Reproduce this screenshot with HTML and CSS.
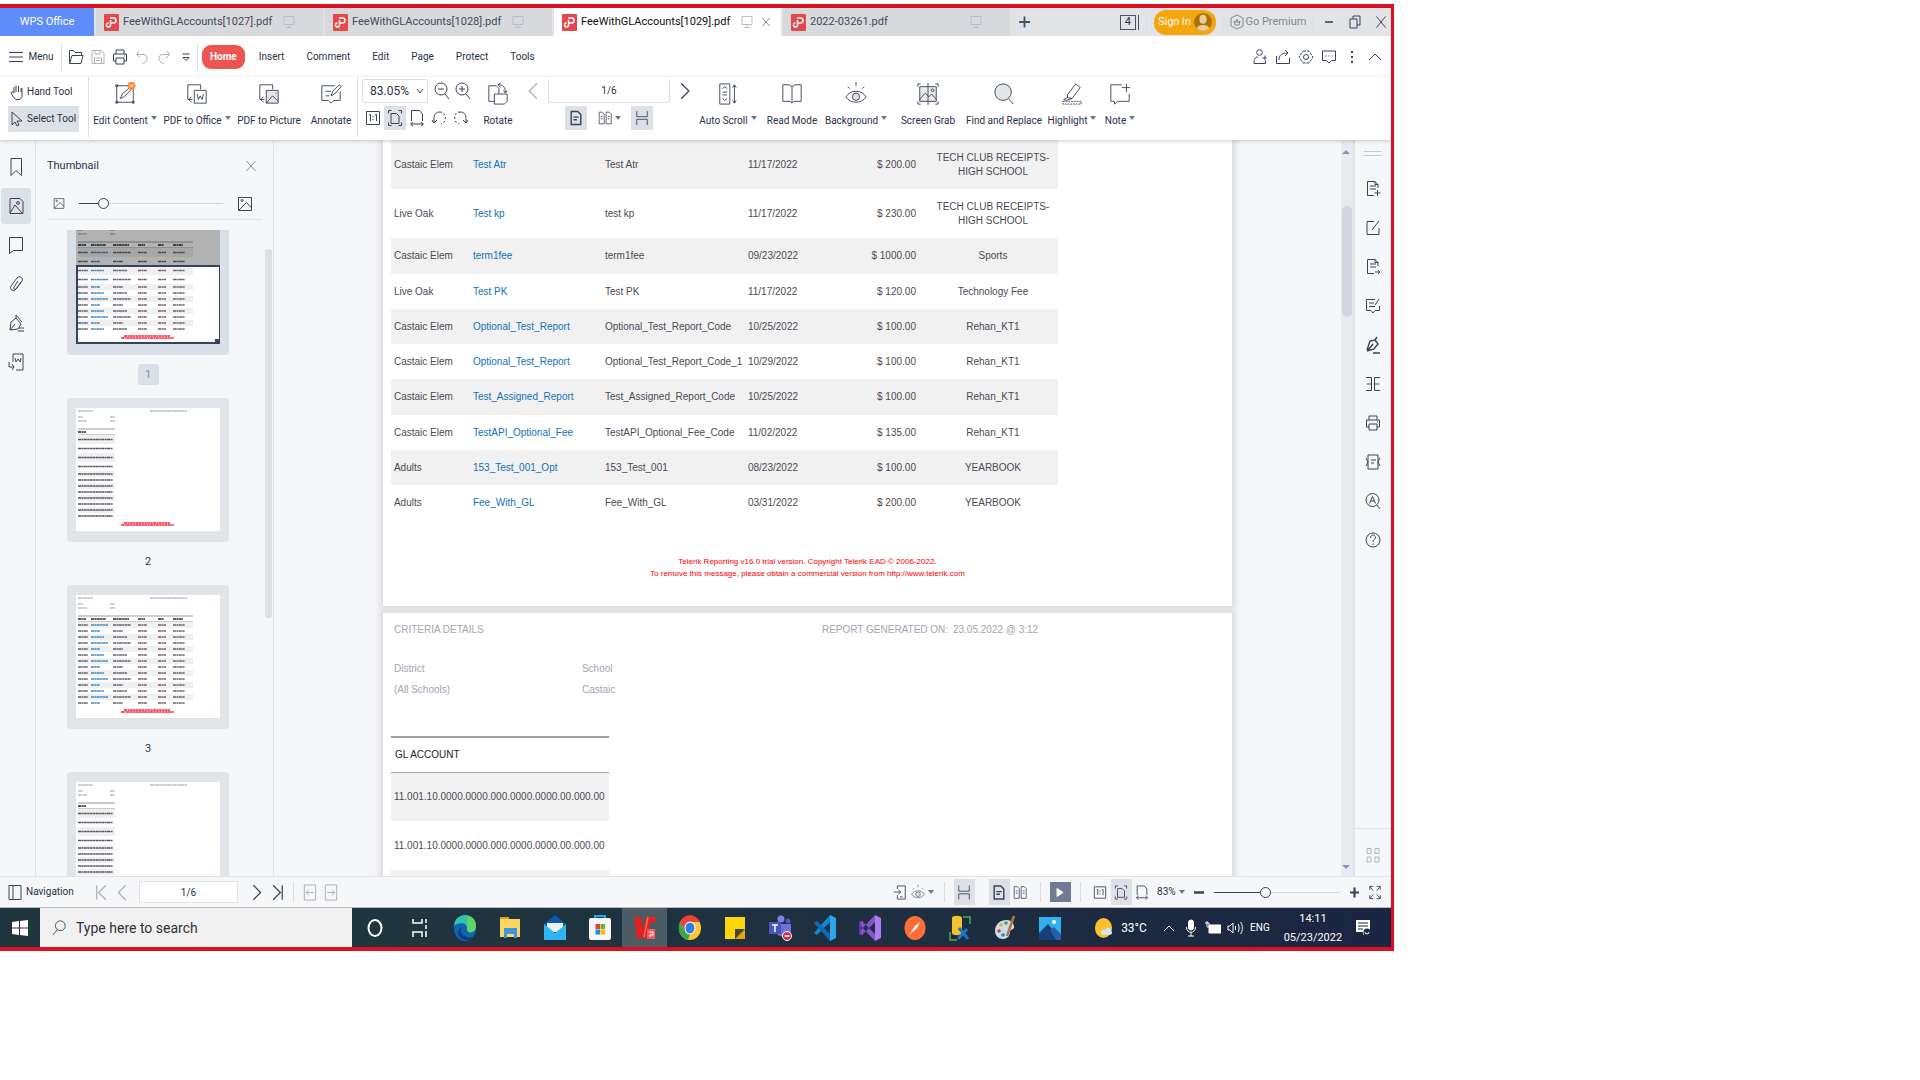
FILE: index.html
```html
<!DOCTYPE html>
<html lang="en">
<head>
    <meta charset="UTF-8">
    <meta name="viewport" content="width=device-width, initial-scale=1.0">
    <title>FeeWithGLAccounts[1029].pdf - WPS Office</title>
    <link rel="stylesheet" href="styles.css">
</head>
<body>
    <!-- shared icons -->
    <svg class="sprite" aria-hidden="true">
        <symbol id="i-pdf" viewBox="0 0 15 17"><rect width="15" height="17" rx="1" fill="#e5484a"/><path d="M6 4h3.500a2.500 2.500 0 0 1 0 5H6.500M6.500 6v5a2 2 0 1 1-2-2" stroke="#fff" stroke-width="1.400" fill="none"/></symbol>
        <symbol id="i-screen" viewBox="0 0 12 14"><path d="M1 1.500h10v8H1zM6 9.500v3M3 12.500h6"/></symbol>
        <symbol id="i-close" viewBox="0 0 12 12"><path d="M1.500 1l9 10M10.500 1l-9 10"/></symbol>
        <symbol id="i-left" viewBox="0 0 10 14"><path d="M8 1L2 7l6 6"/></symbol>
        <symbol id="i-right" viewBox="0 0 10 14"><path d="M2 1l6 6-6 6"/></symbol>
        <symbol id="i-print" viewBox="0 0 16 16"><path d="M4 5V1h8v4M4 12H1.500V5h13v7H12M4 9h8v6H4zM12 7h1"/></symbol>
        <symbol id="i-undo" viewBox="0 0 14 16"><path d="M4 2L1.500 5.500 5 9M1.500 5.500H9a4 4 0 0 1 1 7.500l-3 2"/></symbol>
        <symbol id="i-redo" viewBox="0 0 14 16"><path d="M10 2l2.500 3.500L9 9M12.500 5.500H5a4 4 0 0 0-1 7.500l3 2"/></symbol>
        <symbol id="i-actual" viewBox="0 0 16 16"><path d="M1.500 1.500h13v13h-13zM4 5l1.500-.5V11M10 5l1.500-.5V11M8 6v1.200M8 9v1.200"/></symbol>
        <symbol id="i-fitpage" viewBox="0 0 16 18"><path d="M4 4.500h5.500L12 7v7.500H4zM1.500 4.500v-3h3M11.500 1.500h3v3M1.500 13.500v3h3M11.500 16.500h3v-3"/></symbol>
        <symbol id="i-fitwidth" viewBox="0 0 16 18"><path d="M2.500 12V1.500h8L13.500 5v7M2 15h12M4 13l-2.500 2L4 17M12 13l2.500 2L12 17"/></symbol>
        <symbol id="i-single" viewBox="0 0 16 18"><path d="M2.500 1.500H10L13.500 5v11.500h-11zM5 8h6M5 11h4" stroke-width="1.600"/></symbol>
        <symbol id="i-double" viewBox="0 0 18 18"><path d="M1.500 1.500h4L8 4v12.500H1.500zM10.500 1.500h4L17 4v12.500h-6.500zM3.500 7H6M3.500 10H6M12.500 7H15M12.500 10H15"/></symbol>
        <symbol id="i-flow" viewBox="0 0 16 18"><path d="M2 1v6.500h12V1M2 17v-6.500h12V17"/></symbol>
        <symbol id="i-pic" viewBox="0 0 16 16"><path d="M1.500 1.500h13v13h-13zM1.500 14.500l8-8 5 5.500M6 4.500a1 1 0 1 1-2 0 1 1 0 0 1 2 0"/></symbol>
        <symbol id="i-eye" viewBox="0 0 24 26"><path d="M1 16c5-8 17-8 22 0-5 8-17 8-22 0zM12 0v4M3 5l2 2M21 5l-2 2"/><circle cx="12" cy="16" r="4" fill="#dde0e5"/></symbol>
    </svg>

    <div class="window">
        <header class="title-bar">
            <button class="brand">WPS Office</button>
            <div class="file-tabs">
                <a class="file-tab" href="#"><svg class="pdf"><use href="#i-pdf"/></svg><span>FeeWithGLAccounts[1027].pdf</span><svg class="screen"><use href="#i-screen"/></svg></a>
                <a class="file-tab" href="#"><svg class="pdf"><use href="#i-pdf"/></svg><span>FeeWithGLAccounts[1028].pdf</span><svg class="screen"><use href="#i-screen"/></svg></a>
                <a class="file-tab active" href="#"><svg class="pdf"><use href="#i-pdf"/></svg><span>FeeWithGLAccounts[1029].pdf</span><svg class="screen"><use href="#i-screen"/></svg><svg class="shut"><use href="#i-close"/></svg></a>
                <a class="file-tab" href="#"><svg class="pdf"><use href="#i-pdf"/></svg><span>2022-03261.pdf</span><svg class="screen"><use href="#i-screen"/></svg></a>
            </div>
            <button class="new-tab" aria-label="New tab"><svg viewBox="0 0 12 12"><path d="M6 0v12M0 6h12"/></svg></button>
            <div class="account">
                <button class="count">4</button>
                <i class="sep"></i>
                <button class="sign-in">Sign in <svg viewBox="0 0 20 22"><circle cx="10" cy="11" r="10" fill="#a8720c"/><ellipse cx="10" cy="8" rx="4" ry="5" fill="#e8cd9c"/><path d="M3 18c1-5 13-5 14 0-4 4-10 4-14 0z" fill="#e8cd9c"/></svg></button>
                <i class="sep"></i>
                <button class="premium"><svg viewBox="0 0 14 16"><path d="M7 1l6 3v8l-6 3-6-3V4zM4 7l1 4h4l1-4-2 1.500L7 5 6 8.500z"/></svg>Go Premium</button>
                <i class="sep"></i>
                <button class="win" aria-label="Minimize"><svg viewBox="0 0 12 14"><path d="M2 7h8" stroke-width="1.600"/></svg></button>
                <button class="win" aria-label="Restore"><svg viewBox="0 0 12 14"><path d="M1 4h7v9H1zM4 4V1h7v9H8"/></svg></button>
                <button class="win" aria-label="Close"><svg viewBox="0 0 12 14"><path d="M1.500 1.500l9 11M10.500 1.500l-9 11"/></svg></button>
            </div>
        </header>

        <div class="menu-bar">
            <button class="menu"><svg viewBox="0 0 14 12"><path d="M0 1.500h14M0 6h14M0 10.500h14"/></svg>Menu</button>
            <i class="sep"></i>
            <div class="quick">
                <button aria-label="Open"><svg viewBox="0 0 16 16"><path d="M1.500 14.500v-13h4l1.500 2h6.500v3M1.500 14.500L4 6.500h11l-2 8z"/></svg></button>
                <button class="off" aria-label="Save"><svg viewBox="0 0 16 16"><path d="M2 1.500h9L14 4v10.500H2zM5 1.500V5h5V1.500M4.500 14.500V9h7v5.500M6 11.500h4"/></svg></button>
                <button aria-label="Print"><svg><use href="#i-print"/></svg></button>
                <button class="off" aria-label="Undo"><svg><use href="#i-undo"/></svg></button>
                <button class="off" aria-label="Redo"><svg><use href="#i-redo"/></svg></button>
                <button aria-label="More"><svg viewBox="0 0 16 16"><path d="M4.500 5h7M5 8.500h6L8 11.500z"/></svg></button>
            </div>
            <i class="sep"></i>
            <nav class="ribbon-tabs">
                <a class="active" href="#">Home</a>
                <a href="#">Insert</a>
                <a href="#">Comment</a>
                <a href="#">Edit</a>
                <a href="#">Page</a>
                <a href="#">Protect</a>
                <a href="#">Tools</a>
            </nav>
            <div class="menu-right">
                <button aria-label="Share with"><svg viewBox="0 0 16 16"><circle cx="7.500" cy="3.500" r="2.800"/><path d="M6 8c-3 0-4 2-4 6.500h11.500V12M13 6.500v5M10.500 9h4"/></svg></button>
                <button aria-label="Export"><svg viewBox="0 0 16 16"><path d="M1.500 7v7.500h13V9M4 11c0-5 3-7 8.500-7M10 1l3 3-3 3"/></svg></button>
                <button aria-label="Settings"><svg viewBox="0 0 16 16"><path d="M5 2h6l4 6-4 6H5L1 8z" stroke-dasharray="3 1"/><circle cx="8" cy="8" r="2.500"/></svg></button>
                <button aria-label="Feedback"><svg viewBox="0 0 16 16"><path d="M1.500 2h13v9.500h-4L8 14l-2.500-2.500h-4zM4.500 7h1M7.500 7h1M10.500 7h1"/></svg></button>
                <button aria-label="More options"><svg viewBox="0 0 16 16"><path d="M8 2v2M8 7v2M8 12v2" stroke-width="2"/></svg></button>
                <button aria-label="Collapse"><svg viewBox="0 0 16 16"><path d="M2 11l6-6 6 6"/></svg></button>
            </div>
        </div>

        <div class="ribbon">
            <div class="pointer-tools">
                <button><svg viewBox="0 0 14 16"><path d="M4 9V3M6 8V1.500M8.500 8V2M11 8V4M4 9L2 7.500 1 9l3 5 2 1.500h4l2-3V4"/></svg>Hand Tool</button>
                <button class="on"><svg viewBox="0 0 14 16"><path d="M2 1v13l3-3 2 4 2-1-2-4h5z"/></svg>Select Tool</button>
            </div>
            <i class="sep"></i>
            <button class="tool lg"><svg viewBox="0 0 24 24"><path d="M3 3h18v18H3zM2 2h2v2H2zM2 20h2v2H2zM20 20h2v2h-2zM7 17l2-5 8-7 2 2-8 8z"/><circle cx="19" cy="3" r="4.500" fill="#fb923c" stroke="none"/><path d="M17.500 1.500l1.500 3 1.500-3" stroke="#fff"/></svg><span>Edit Content<i class="caret"></i></span></button>
            <button class="tool lg"><svg viewBox="0 0 24 24"><path d="M7 18H2V2h14v5M3 18l3-3M3 18l3 3"/><path d="M9 8h13v14H9zM12 12l1.500 6 2-4 2 4 1.500-6"/></svg><span>PDF to Office<i class="caret"></i></span></button>
            <button class="tool lg"><svg viewBox="0 0 24 24"><path d="M7 18H2V2h14v5M3 18l3-3M3 18l3 3"/><path d="M9 8h13v14H9z" fill="#e4e6ea"/><path d="M9 22l7-8 6 6M19 11h1"/></svg><span>PDF to Picture</span></button>
            <button class="tool annotate"><svg viewBox="0 0 24 24"><path d="M16 3H2v16h7l3 3 3-3h7V9M6 9h6M6 14h4"/><path d="M12 14l2-5 7-7 2 2-7 8z"/></svg><span>Annotate</span></button>
            <i class="sep"></i>
            <div class="zoom-tools">
                <div class="line">
                    <div class="zoom-box">
                        <select aria-label="Zoom"><option>83.05%</option></select>
                        <svg viewBox="0 0 8 10"><path d="M1 3l3 4 3-4"/></svg>
                    </div>
                    <button aria-label="Zoom out"><svg viewBox="0 0 16 18"><circle cx="7" cy="7" r="6"/><path d="M11 12l4 5M4 7h6"/></svg></button>
                    <button aria-label="Zoom in"><svg viewBox="0 0 16 18"><circle cx="7" cy="7" r="6"/><path d="M11 12l4 5M4 7h6M7 4v6"/></svg></button>
                </div>
                <div class="line">
                    <button aria-label="Actual size"><svg><use href="#i-actual"/></svg></button>
                    <button class="on" aria-label="Fit page"><svg><use href="#i-fitpage"/></svg></button>
                    <button aria-label="Fit width"><svg><use href="#i-fitwidth"/></svg></button>
                    <button aria-label="Rotate left"><svg viewBox="0 0 16 16"><path d="M3 13V9C3 4 5 2 9 2M1 10l2 3 3-3"/><path d="M9 2c7 0 7 11 1 12" stroke-dasharray="2 2"/></svg></button>
                    <button aria-label="Rotate right"><svg viewBox="0 0 16 16"><path d="M13 13V9c0-5-2-7-6-7M10 10l3 3 2-3"/><path d="M7 2C0 2 0 13 6 14" stroke-dasharray="2 2"/></svg></button>
                </div>
            </div>
            <button class="tool sm"><svg viewBox="0 0 24 24"><path d="M8 20H2V3h8l3 3v6M13 2c5 0 7 3 7 8M15 0l-3 2 3 3M18 8l2 3 2-3"/><path d="M8 12h14v8l-3 3H8z"/></svg><span>Rotate</span></button>
            <div class="pager">
                <div class="line">
                    <button class="off" aria-label="Previous page"><svg><use href="#i-left"/></svg></button>
                    <input type="text" value="1/6" aria-label="Page">
                    <button aria-label="Next page"><svg><use href="#i-right"/></svg></button>
                </div>
                <div class="line modes">
                    <button class="on" aria-label="Single page"><svg><use href="#i-single"/></svg></button>
                    <button aria-label="Two pages"><svg><use href="#i-double"/></svg><i class="caret"></i></button>
                    <button class="on" aria-label="Continuous"><svg><use href="#i-flow"/></svg></button>
                </div>
            </div>
            <button class="tool md"><svg viewBox="0 0 24 24"><path d="M3 1h11v22H3zM6 6l2.500-2L11 6M6 10h5M6 13h5M6 17l2.500 2 2.500-2M19 2v20M17 5l2-3 2 3M17 19l2 3 2-3"/></svg><span>Auto Scroll<i class="caret"></i></span></button>
            <button class="tool md"><svg viewBox="0 0 24 24"><path d="M12 4v17M2 2h7l3 2 3-2h7v18h-8l-2 2-2-2H2z"/></svg><span>Read Mode</span></button>
            <button class="tool md"><svg><use href="#i-eye"/></svg><span>Background<i class="caret"></i></span></button>
            <button class="tool xl"><svg viewBox="0 0 24 24"><path d="M3 4h18v16H3z" fill="#e8eaed"/><path d="M3 18l6-7 4 4 3-3 5 6M1 4V1h3M20 1h3v3M1 20v3h3M20 23h3v-3M12 0v24"/><circle cx="17" cy="8" r="1.500"/></svg><span>Screen Grab</span></button>
            <button class="tool lg"><svg viewBox="0 0 24 24"><circle cx="11" cy="10" r="9" fill="#e4e6e8"/><path d="M17 17l5 6"/></svg><span>Find and Replace</span></button>
            <button class="tool md"><svg viewBox="0 0 24 24"><path d="M7 13L16 1l5 4-9 12-5-1zM7 13v3l-4 2 3 1 6-2"/><path d="M2 20h20v3H2z" stroke-dasharray="2 1"/></svg><span>Highlight<i class="caret"></i></span></button>
            <button class="tool xs"><svg viewBox="0 0 24 24"><path d="M14 2H2v18h4v3l4-3h12v-8M19 1v9M14 5h9"/></svg><span>Note<i class="caret"></i></span></button>
        </div>

        <main class="workspace">
            <aside class="rail">
                <button aria-label="Bookmarks"><svg viewBox="0 0 16 20"><path d="M3 1.500h10.500v17L8 13.500l-5 5z"/></svg></button>
                <button class="on" aria-label="Thumbnails"><svg viewBox="0 0 16 20"><path d="M2 2.500h10l3 3v12H2zM2 17l5-8 7 8"/><circle cx="10" cy="7" r="1.400"/></svg></button>
                <button aria-label="Comments"><svg viewBox="0 0 16 20"><path d="M1.500 2.500h13v13h-9l-4 3z"/></svg></button>
                <button aria-label="Attachments"><svg viewBox="0 0 16 20"><path d="M13 8l-5 7c-2 3-7 1-5-3l6-8c2-3 7 0 5 3l-6 8c-1 1-3 0-2-2l4-6"/></svg></button>
                <button aria-label="Signatures"><svg viewBox="0 0 16 20"><path d="M2 17l1-8 5-4 5 6-3 5zM8 5V2l6 7M2 17l5-6M11 15h5M10 18h6"/></svg></button>
                <button aria-label="Convert"><svg viewBox="0 0 16 20"><path d="M5 10V2h10v16H8M7 6l1 4 2-3 2 3 1-4M1 10v5h5M4 12l2 3-2 3"/></svg></button>
            </aside>

            <section class="thumb-panel">
                <div class="panel-head">
                    <h2>Thumbnail</h2>
                    <button aria-label="Close panel"><svg><use href="#i-close"/></svg></button>
                </div>
                <div class="thumb-size">
                    <svg class="small"><use href="#i-pic"/></svg>
                    <input type="range" min="0" max="100" value="14" aria-label="Thumbnail size">
                    <svg class="large"><use href="#i-pic"/></svg>
                </div>
                <div class="thumb-list">
                    <figure class="thumb current"><div class="card"><svg class="mini" data-kind="first"></svg></div><figcaption>1</figcaption></figure>
                    <figure class="thumb"><div class="card"><svg class="mini" data-kind="accounts"></svg></div><figcaption>2</figcaption></figure>
                    <figure class="thumb"><div class="card"><svg class="mini" data-kind="table"></svg></div><figcaption>3</figcaption></figure>
                    <figure class="thumb"><div class="card"><svg class="mini" data-kind="accounts"></svg></div></figure>
                    <i class="scroll-thumb"></i>
                </div>
            </section>

            <section class="viewer">
                <article class="page">
                    <table class="fees">
                        <colgroup><col class="c-school"><col class="c-name"><col class="c-code"><col class="c-date"><col class="c-amount"><col class="c-category"></colgroup>
                        <tr class="tall"><td>Castaic Elem</td><td><a href="#">Test Atr</a></td><td>Test Atr</td><td>11/17/2022</td><td>$ 200.00</td><td>TECH CLUB RECEIPTS-<br>HIGH SCHOOL</td></tr>
                        <tr class="tall"><td>Live Oak</td><td><a href="#">Test kp</a></td><td>test kp</td><td>11/17/2022</td><td>$ 230.00</td><td>TECH CLUB RECEIPTS-<br>HIGH SCHOOL</td></tr>
                        <tr><td>Castaic Elem</td><td><a href="#">term1fee</a></td><td>term1fee</td><td>09/23/2022</td><td>$ 1000.00</td><td>Sports</td></tr>
                        <tr><td>Live Oak</td><td><a href="#">Test PK</a></td><td>Test PK</td><td>11/17/2022</td><td>$ 120.00</td><td>Technology Fee</td></tr>
                        <tr><td>Castaic Elem</td><td><a href="#">Optional_Test_Report</a></td><td>Optional_Test_Report_Code</td><td>10/25/2022</td><td>$ 100.00</td><td>Rehan_KT1</td></tr>
                        <tr><td>Castaic Elem</td><td><a href="#">Optional_Test_Report</a></td><td>Optional_Test_Report_Code_1</td><td>10/29/2022</td><td>$ 100.00</td><td>Rehan_KT1</td></tr>
                        <tr><td>Castaic Elem</td><td><a href="#">Test_Assigned_Report</a></td><td>Test_Assigned_Report_Code</td><td>10/25/2022</td><td>$ 100.00</td><td>Rehan_KT1</td></tr>
                        <tr><td>Castaic Elem</td><td><a href="#">TestAPI_Optional_Fee</a></td><td>TestAPI_Optional_Fee_Code</td><td>11/02/2022</td><td>$ 135.00</td><td>Rehan_KT1</td></tr>
                        <tr><td>Adults</td><td><a href="#">153_Test_001_Opt</a></td><td>153_Test_001</td><td>08/23/2022</td><td>$ 100.00</td><td>YEARBOOK</td></tr>
                        <tr><td>Adults</td><td><a href="#">Fee_With_GL</a></td><td>Fee_With_GL</td><td>03/31/2022</td><td>$ 200.00</td><td>YEARBOOK</td></tr>
                    </table>
                    <p class="trial">Telerik Reporting v16.0 trial version. Copyright Telerik EAD © 2006-2022.<br>To remove this message, please obtain a commercial version from http://www.telerik.com</p>
                </article>
                <article class="page">
                    <div class="criteria-head"><span>CRITERIA DETAILS</span><span>REPORT GENERATED ON:</span><span>23.05.2022 @ 3:12</span></div>
                    <dl class="criteria">
                        <div><dt>District</dt><dd>(All Schools)</dd></div>
                        <div><dt>School</dt><dd>Castaic</dd></div>
                    </dl>
                    <table class="accounts">
                        <tr><th>GL ACCOUNT</th></tr>
                        <tr><td>11.001.10.0000.0000.000.0000.0000.00.000.00</td></tr>
                        <tr><td>11.001.10.0000.0000.000.0000.0000.00.000.00</td></tr>
                        <tr><td></td></tr>
                    </table>
                </article>
            </section>
            <div class="scrollbar"><i class="up"></i><i class="grip"></i><i class="down"></i></div>

            <aside class="side-tools">
                <i class="handle"></i>
                <button aria-label="Insert page"><svg viewBox="0 0 16 18"><path d="M13 8V4.500L10 1.500H2.500v14H9M5 6h6M5 9h6M10 1.500v3h3M12.500 10v6M9.500 13h6"/></svg></button>
                <button aria-label="Edit"><svg viewBox="0 0 16 18"><path d="M9 2.500H2v13h12V9M7 11l7-9"/></svg></button>
                <button aria-label="Extract page"><svg viewBox="0 0 16 18"><path d="M13 8V4.500L10 1.500H2.500v14H9M5 6h6M5 9h6M10 1.500v3h3M10 14h5M13 12l2 2-2 2"/></svg></button>
                <button aria-label="Comment"><svg viewBox="0 0 16 18"><path d="M10 2.500H1.500v11H6L8 16l2-2.500h4.500V9M4 6h5M4 9.500h6M10 8l4-6"/></svg></button>
                <button aria-label="Sign"><svg viewBox="0 0 16 18"><path d="M2 14l3-9 5-1 3 4-4 5-7 2M10 4l2-3M3 14l5-6M8 17h7" stroke-width="1.400"/></svg></button>
                <button aria-label="Compare"><svg viewBox="0 0 16 18"><path d="M1 2.500h5.500v13H1M2 9h4.500M15 2.500H9.500v13H15M9.500 9H14"/></svg></button>
                <button aria-label="Print"><svg><use href="#i-print"/></svg></button>
                <button aria-label="Compress"><svg viewBox="0 0 16 18"><path d="M3 2h10v14H3zM6 7h5M6 10h3M1 5l2 4-2 4M15 5l-2 4 2 4"/></svg></button>
                <button aria-label="OCR"><svg viewBox="0 0 16 18"><circle cx="7.500" cy="8" r="6.500"/><path d="M4.500 11.500l3-7 3 7M5.500 9h4M12 13l3 4"/></svg></button>
                <button aria-label="Help"><svg viewBox="0 0 16 18"><circle cx="8" cy="9" r="7"/><path d="M5.500 7c0-4 5-4 5-.5 0 2-2.500 2-2.500 4.500M8 12.500v1.500"/></svg></button>
                <button class="apps" aria-label="Apps"><svg viewBox="0 0 16 18"><path d="M2 2.500h4v5H2zM10 2.500h4v5h-4zM2 11h4v5H2zM10 11h4v5h-4z"/></svg></button>
            </aside>
        </main>

        <footer class="status-bar">
            <button class="nav"><svg viewBox="0 0 14 16"><path d="M1 1h12v14H1zM5 1v14"/></svg>Navigation</button>
            <button class="off" aria-label="First page"><svg viewBox="0 0 10 14"><path d="M1.500 1v12M9 1L3 7l6 6"/></svg></button>
            <button class="off" aria-label="Previous page"><svg><use href="#i-left"/></svg></button>
            <input type="text" value="1/6" aria-label="Page number">
            <button aria-label="Next page"><svg><use href="#i-right"/></svg></button>
            <button aria-label="Last page"><svg viewBox="0 0 10 14"><path d="M8.500 1v12M1 1l6 6-6 6"/></svg></button>
            <i class="sep"></i>
            <button class="off" aria-label="Back"><svg viewBox="0 0 14 18"><path d="M1 1h12v16H1zM3 9h8M6 6L3 9l3 3"/></svg></button>
            <button class="off" aria-label="Forward"><svg viewBox="0 0 14 18"><path d="M1 1h12v16H1zM3 9h8M8 6l3 3-3 3"/></svg></button>
            <div class="view-tools">
                <button aria-label="Send to phone"><svg viewBox="0 0 16 18"><path d="M5 5V1.500h9v15H5V12M1 8.500h7M6 6l3 2.500L6 11M8 14h3"/></svg></button>
                <button aria-label="Eye protection"><svg><use href="#i-eye"/></svg><i class="caret"></i></button>
                <i class="sep"></i>
                <button class="on" aria-label="Continuous"><svg><use href="#i-flow"/></svg></button>
                <button class="on far" aria-label="Single page"><svg><use href="#i-single"/></svg></button>
                <button aria-label="Two pages"><svg><use href="#i-double"/></svg></button>
                <i class="sep"></i>
                <button class="play" aria-label="Play"><svg viewBox="0 0 12 12"><path d="M3 2l6 4-6 4z"/></svg></button>
                <i class="sep"></i>
                <button aria-label="Actual size"><svg><use href="#i-actual"/></svg></button>
                <button class="on" aria-label="Fit page"><svg><use href="#i-fitpage"/></svg></button>
                <button aria-label="Fit width"><svg><use href="#i-fitwidth"/></svg></button>
                <button class="percent">83%<i class="caret"></i></button>
                <button aria-label="Zoom out"><svg viewBox="0 0 14 14"><path d="M2 7h10" stroke-width="2.500"/></svg></button>
                <input type="range" min="0" max="100" value="40" aria-label="Zoom level">
                <button aria-label="Zoom in"><svg viewBox="0 0 14 14"><path d="M3 7h9M7.500 2v10" stroke-width="2.200"/></svg></button>
                <button aria-label="Full screen"><svg viewBox="0 0 16 18"><path d="M2 6V2h4M2 2l4 5M14 6V2h-4M14 2l-4 5M2 12v4h4M2 16l4-5M14 12v4h-4M14 16l-4-5"/></svg></button>
            </div>
        </footer>

        <div class="taskbar">
            <button class="start" aria-label="Start"><svg viewBox="0 0 16 18"><path d="M0 3l7-1v6.500H0zM8 2l8-1v7.500H8zM0 9.500h7V16l-7-1zM8 9.500h8V17l-8-1z" fill="#fff"/></svg></button>
            <label class="search"><svg viewBox="0 0 16 18"><circle cx="9.500" cy="6.500" r="5.500"/><path d="M6 11l-5 6"/></svg><input type="text" placeholder="Type here to search"></label>
            <div class="apps-row">
                <button aria-label="Cortana"><svg viewBox="0 0 24 28"><ellipse cx="12" cy="14" rx="6.500" ry="8" fill="none" stroke="#fff" stroke-width="2"/></svg></button>
                <button aria-label="Task view"><svg viewBox="0 0 24 28"><path d="M5 5v4h9V5M5 23v-5h9v5M18 5v4M18 11v4M18 17v6" fill="none" stroke="#fff" stroke-width="1.500"/></svg></button>
                <button aria-label="Edge"><svg viewBox="0 0 24 28"><ellipse cx="12" cy="14" rx="11" ry="13" fill="#0f65b4"/><path d="M1 12C2-3 23-2 23 12c0 7-8 8-9 4 2-7-7-9-13-4z" fill="#35c1b0"/><path d="M14 2c6 1 9 5 9 10 0 7-8 8-9 4z" fill="#5fd663"/><path d="M9 13c-3 6 2 12 11 10-5 6-14 3-15-4 0-3 2-5 4-6z" fill="#0b3f7d"/></svg></button>
                <button aria-label="File Explorer"><svg viewBox="0 0 24 28"><path d="M2 3h9v4H2z" fill="#e0a100"/><path d="M2 5h20v18H2z" fill="#fcd462"/><path d="M6 14h13v10h-3v-4H9v4H6z" fill="#3e95dc"/></svg></button>
                <button aria-label="Mail"><svg viewBox="0 0 24 28"><path d="M1 10L12 1l11 9v4H1z" fill="#0a5ab0"/><path d="M4 9h16v9H4z" fill="#f1f1f1"/><path d="M1 10l11 9 11-9v16H1z" fill="#2eb5f2"/></svg></button>
                <button aria-label="Store"><svg viewBox="0 0 24 28"><path d="M7 5V2h10v3" stroke="#29a8ea" stroke-width="2" fill="none"/><rect x="1" y="4" width="22" height="22" rx="2" fill="#f5f5f5"/><path d="M7.500 10H12v5H7.500z" fill="#e8432d"/><path d="M12.500 10H17v5h-4.500z" fill="#70b32c"/><path d="M7.500 15.500H12v5H7.500z" fill="#1592e0"/><path d="M12.500 15.500H17v5h-4.500z" fill="#f9b51a"/></svg></button>
                <button class="running" aria-label="WPS"><svg viewBox="0 0 24 28"><path d="M1 3h7l2 12 3-12h10v5h-5l-5 17H9L8 19l-1 6H4z" fill="#e22121"/><path d="M15 3l-4 20" stroke="#ff6a4d" stroke-width="1.500"/><rect x="14" y="15" width="8" height="10" fill="#f05a63"/><path d="M16 18h4v3h-3v2" stroke="#fff" fill="none"/></svg></button>
                <button aria-label="Chrome"><svg viewBox="0 0 24 28"><ellipse cx="12" cy="14" rx="11" ry="12" fill="#fcc934"/><path d="M2 8c4-9 16-9 20 0H12l-5 9z" fill="#ea4335"/><path d="M2 8l6 11 4 1-2 6C1 24-1 14 2 8z" fill="#34a853"/><ellipse cx="12" cy="14" rx="5.500" ry="6.500" fill="#fff"/><ellipse cx="12" cy="14" rx="4.500" ry="5.500" fill="#2f7de9"/></svg></button>
                <button aria-label="Sticky Notes"><svg viewBox="0 0 24 28"><path d="M2 3h20v13l-9 9H2z" fill="#fdd50c"/><path d="M12 25V15h10z" fill="#454335"/><path d="M22 16v9h-9z" fill="#e8a80c"/></svg></button>
                <button aria-label="Teams"><svg viewBox="0 0 24 28"><circle cx="13" cy="5" r="3.500" fill="#7b83eb"/><circle cx="20" cy="7" r="2.500" fill="#5059c9"/><path d="M8 10h15v7c0 7-13 8-15 1z" fill="#6a72dc"/><path d="M1 8h12v12H1z" fill="#4b53bc"/><path d="M4 11h6M7 11v7" stroke="#fff" stroke-width="1.500"/><circle cx="19" cy="22" r="4.500" fill="#c4314b" stroke="#fff"/><path d="M16.500 22h5" stroke="#fff" stroke-width="1.500"/></svg></button>
                <button aria-label="VS Code"><svg viewBox="0 0 24 28"><path d="M1 19L17 1v7L4 21z" fill="#1088d4"/><path d="M1 9l3-2 13 13v7z" fill="#0b6cb5"/><path d="M17 1l6 3v20l-6 3z" fill="#2aa7ee"/></svg></button>
                <button aria-label="Visual Studio"><svg viewBox="0 0 24 28"><path d="M1 8l3-1 13 13v7L1 10zM1 20l3 1L17 8V1L1 18z" fill="#8a52cf"/><path d="M1 8l2 1v10l-2 1z" fill="#6a35a8"/><path d="M17 1l6 3v20l-6 3z" fill="#b07af0"/></svg></button>
                <button aria-label="Postman"><svg viewBox="0 0 24 28"><ellipse cx="12" cy="14" rx="10.500" ry="12" fill="#ff6c37"/><path d="M6 21l6-9 5-4-3 6z" fill="#fff"/></svg></button>
                <button aria-label="SQL tools"><svg viewBox="0 0 24 28"><path d="M15 3h7v7M2 18v8h7" fill="none" stroke="#448a4a" stroke-width="2"/><path d="M4 4c0-3 10-3 10 0v15c0 3-10 3-10 0z" fill="#f4c22b"/><path d="M10 25l9-10M11 14l9 11" stroke="#1b74c5" stroke-width="3"/></svg></button>
                <button aria-label="Paint"><svg viewBox="0 0 24 28"><path d="M2 17C2 5 19 2 21 12c1 4-4 3-4 6s-2 7-7 7-8-4-8-8z" fill="#cbdde9"/><circle cx="6" cy="17" r="1.800" fill="#d83b3b"/><circle cx="8" cy="11" r="1.800" fill="#f0a62c"/><circle cx="13" cy="9" r="1.800" fill="#3aa45c"/><circle cx="10" cy="21" r="1.800" fill="#3a73c9"/><path d="M21 2l-7 20" stroke="#b9743c" stroke-width="2.500"/></svg></button>
                <button aria-label="Photos"><svg viewBox="0 0 24 28"><path d="M1 3h22v23H1z" fill="#30b0ef"/><path d="M1 19l9-9 13 16H1z" fill="#173f78"/><path d="M12 16l4-3 7 7v6h-5z" fill="#2b5ea8"/><circle cx="16" cy="8" r="2" fill="#fff"/></svg></button>
            </div>
            <div class="tray">
                <button class="weather"><svg viewBox="0 0 20 22"><ellipse cx="10" cy="11" rx="9" ry="10.500" fill="#fcc02f"/><path d="M8 18c-2-4 2-6 4-5 1-4 7-2 6 1 2 2 1 4-1 4z" fill="#cfe8fb"/></svg>33°C</button>
                <svg viewBox="0 0 16 18"><path d="M3 12l5-5 5 5"/></svg>
                <svg viewBox="0 0 16 18"><rect x="5.500" y="1" width="5" height="10" rx="2.500" fill="#fff"/><path d="M3.500 8c0 7 9 7 9 0M8 13v4M5 17h6"/></svg>
                <svg viewBox="0 0 16 18"><path d="M4 6h12v8H4z" fill="#fff"/><path d="M0 4h4M2 2v5c0 2 2 2 2 0V4"/></svg>
                <svg viewBox="0 0 16 18"><path d="M1 7h2l3-3v10l-3-3H1zM8.500 7v4M11 5c1.500 2 1.500 6 0 8M13.500 3c2.500 3 2.500 9 0 12"/></svg>
                <span class="lang">ENG</span>
                <div class="clock"><span>14:11</span><span>05/23/2022</span></div>
                <svg class="note" viewBox="0 0 16 18"><path d="M1 1h14v12h-4l-3 3v-3H1z" fill="#fff"/><path d="M3 4h10M3 7h10M3 10h5" stroke="#1b2942"/><circle cx="12" cy="13" r="3.500" fill="#1b2942"/><path d="M10 13a2 2 0 0 0 4 0" stroke="#fff"/></svg>
            </div>
        </div>
    </div>

    <script>
        //draws the small page previews
        const cols = [[2,10],[15,17],[37,18],[62,9],[82,8],[97,12]]
        const colors = ["#5f6270","#3f86bd","#5f6270","#7b5b66","#7b5b66","#6d6470"]

        function bar(x,y,w,color){
            return `<path d="M${x} ${y}h${w}" stroke="${color}" stroke-width="1.5" stroke-dasharray="3 .4 2 .4"/>`
        }

        function drawMini(svg){
            const kind = svg.dataset.kind
            const wide = kind === "accounts" ? 37 : 115
            let out = bar(2,3,15,"#b9bbc6") + bar(74,3,37,"#b9bbc6") + bar(2,9,5,"#b9bbc6") + bar(34,9,5,"#b9bbc6") + bar(2,13,9,"#b9bbc6") + bar(34,13,5,"#b9bbc6")
            out += `<path d="M2 21h${wide}M2 27h${wide}" stroke="#9a9a9a"/>`
            const heads = kind === "accounts" ? cols.slice(0,1) : cols
            heads.forEach(([x,w]) => out += bar(x,24,w - 2,"#22242c"))
            const rows = kind === "table" ? 14 : 12
            let y = 27
            for(let i = 0; i < rows; i++){
                const h = kind === "table" ? 6 : i < 4 ? 9 : 6
                if(i % 2 === 0){
                    out += `<rect x="2" y="${y}" width="${wide}" height="${h}" fill="#f0f0f0"/>`
                }
                if(kind === "accounts"){
                    out += bar(2,y + h / 2,35,"#5a5364")
                }else{
                    cols.forEach(([x,w],n) => {
                        //names have different lengths
                        const len = n === 1 || n === 2 ? w - (i * 5 % 3) * 4 : w
                        out += bar(x,y + h / 2,len,colors[n])
                    })
                }
                y += h
            }
            out += bar(48,115,46,"#ff2038") + bar(45,117,53,"#ff2038")
            if(kind === "first"){
                out += `<path d="M0 0h144v44H0z" fill="rgba(0,0,0,.3)"/><path d="M1 45h143v77H1z" fill="none" stroke="#36435c" stroke-width="2"/><path d="M139 118h5v5h-5z" fill="#36435c"/>`
            }
            svg.setAttribute("viewBox","0 0 144 123")
            svg.innerHTML = out
        }
        document.querySelectorAll(".mini").forEach(drawMini)
    </script>
</body>
</html>
```
FILE: styles.css
```css
*{
    margin: 0;
    padding: 0;
    box-sizing: border-box;
}
body{
    display: flex;
    height: 100vh;
    padding: 4px 0 129px;
    background-color: #fff;
    color: #2a3145;
    font: 10px/16px Roboto, "Liberation Sans", sans-serif;
}
button,input,select{
    font: inherit;
    color: inherit;
    border: 0;
    background: none;
}
a{
    color: inherit;
    text-decoration: none;
}
button{
    display: flex;
    align-items: center;
    justify-content: center;
    white-space: nowrap;
}
svg{
    flex: none;
    display: block;
    width: 16px;
    height: 16px;
    fill: none;
    stroke: #3b435a;
}
.sprite{
    position: absolute;
    width: 0;
    height: 0;
}
.sep{
    flex: none;
    width: 1px;
    height: 20px;
    background-color: #dcdee2;
}
.caret{
    display: inline-block;
    margin-left: 3px;
    border: 3px solid transparent;
    border-top: 4px solid #6b7690;
    border-bottom: 0;
    vertical-align: 4px;
}
.off{
    opacity: .4;
}
.on{
    background-color: #dce1e7;
}
.window{
    display: flex;
    flex-direction: column;
    width: 72.6%;
    border: 4px solid #dc1020;
    border-width: 4px 3px 4px 0;
    overflow: hidden;
}

/* title bar */
.title-bar{
    display: flex;
    align-items: center;
    height: 28px;
    flex: none;
    background-color: #e2e3e7;
    font-size: 11px;
}
.brand{
    width: 94px;
    height: 28px;
    background-color: #5f8dfb;
    color: #fff;
}
.file-tabs{
    display: flex;
    gap: 2px;
    margin-left: 2px;
}
.file-tab{
    display: flex;
    align-items: center;
    width: 227px;
    height: 28px;
    padding: 0 8px;
    background-color: #d8d9dd;
    color: #3f4a61;
}
.file-tab.active{
    background-color: #fff;
    color: #111;
}
.file-tab span{
    flex: none;
    width: 160px;
    padding-left: 4px;
}
.pdf{
    width: 15px;
    height: 17px;
    stroke: none;
}
.screen{
    width: 12px;
    height: 14px;
    margin-left: 4px;
    stroke: #b7bed1;
}
.shut{
    width: 10px;
    height: 12px;
    margin-left: 8px;
    stroke: #6f7890;
}
.new-tab{
    width: 28px;
}
.new-tab svg{
    width: 11px;
    stroke: #46536e;
    stroke-width: 2;
}
.account{
    display: flex;
    align-items: center;
    gap: 7px;
    margin-left: auto;
}
.count{
    width: 16px;
    height: 15px;
    margin-right: 3px;
    border: 1px solid #46536e;
    box-shadow: 2px 0 #e2e3e7, 3px 0 #46536e;
}
.sign-in{
    gap: 3px;
    width: 62px;
    height: 25px;
    border-radius: 12px;
    background-color: #f5a60d;
    color: #fff;
}
.sign-in svg{
    width: 18px;
    height: 22px;
    stroke: none;
}
.account .premium{
    width: 78px;
    margin: 0 -2px;
    color: #85888f;
}
.premium svg{
    stroke: #85888f;
}
.win{
    width: 19px;
}
.win svg{
    width: 12px;
    height: 14px;
}

/* menu row */
.menu-bar{
    display: flex;
    align-items: center;
    height: 41px;
    flex: none;
}
.menu{
    gap: 5px;
    width: 61px;
    padding-left: 2px;
}
.menu svg{
    width: 14px;
    height: 12px;
}
.menu-bar .sep{
    height: 26px;
}
.quick{
    display: flex;
    margin-left: 3px;
}
.quick button{
    width: 22px;
}
.ribbon-tabs{
    display: flex;
    align-items: center;
    gap: 22px;
    margin-left: 4px;
}
.ribbon-tabs .active{
    padding: 4px 8px;
    margin-right: -8px;
    border-radius: 9px;
    background-color: #ec5552;
    color: #fff;
    font-weight: bold;
}
.menu-right{
    display: flex;
    gap: 7px;
    margin: 0 8px 0 auto;
}

/* ribbon */
.ribbon{
    position: relative;
    z-index: 1;
    display: flex;
    height: 63px;
    flex: none;
    background-color: #fff;
    box-shadow: 0 1px 4px rgba(0,0,0,.2);
}
.ribbon > .sep{
    height: 60px;
}
.pointer-tools{
    display: flex;
    flex: none;
    flex-direction: column;
    gap: 1px;
    width: 88px;
    padding: 2px 9px 0 8px;
}
.pointer-tools button{
    gap: 3px;
    height: 26px;
    padding-left: 2px;
    justify-content: flex-start;
}
.pointer-tools svg{
    width: 14px;
}
.tool{
    flex: none;
    flex-direction: column;
    justify-content: flex-start;
    gap: 7px;
    padding-top: 5px;
}
.tool svg{
    width: 22px;
    height: 24px;
}
.xs{ width: 32px; }
.sm{ width: 48px; }
.annotate{ width: 52px; }
.md{ width: 64px; }
.lg{ width: 72px; }
.xl{ width: 80px; }
.line{
    display: flex;
    align-items: center;
    height: 24px;
}
.line button{
    width: 22px;
    height: 24px;
}
.line svg{
    height: 18px;
}
.zoom-tools{
    display: flex;
    flex: none;
    flex-direction: column;
    gap: 3px;
    width: 116px;
    padding: 2px 0 0 4px;
}
.zoom-box{
    position: relative;
    width: 68px;
    margin-right: 4px;
}
.zoom-box svg{
    position: absolute;
    right: 4px;
    top: 7px;
    width: 8px;
    height: 10px;
    pointer-events: none;
}
.zoom-tools select{
    width: 100%;
    height: 24px;
    padding-left: 7px;
    appearance: none;
    border: 1px solid #dcdee2;
    border-radius: 3px;
    font-size: 12px;
}
.pager{
    display: flex;
    flex: none;
    flex-direction: column;
    gap: 3px;
    padding-top: 2px;
}
.pager input{
    width: 122px;
    height: 24px;
    margin: 0 4px;
    border: 1px solid #dcdee2;
    border-top: 0;
    border-radius: 3px;
    text-align: center;
}
.pager .line svg{
    width: 14px;
}
.modes{
    justify-content: center;
    gap: 7px;
}
.modes button:nth-child(2){
    width: 30px;
}

/* workspace */
.workspace{
    display: flex;
    flex: 1;
    min-height: 0;
    background-color: #f6f7f9;
}
.rail{
    display: flex;
    flex-direction: column;
    gap: 3px;
    width: 36px;
    padding: 9px 4px 0 1px;
    border-right: 1px solid #dfe2e6;
}
.rail button{
    width: 30px;
    height: 36px;
    border-radius: 3px;
}
.rail svg{
    height: 20px;
}
.thumb-panel{
    display: flex;
    flex-direction: column;
    width: 238px;
    border-right: 1px solid #dfe2e6;
}
.panel-head{
    display: flex;
    align-items: center;
    justify-content: space-between;
    padding: 16px 16px 0 11px;
}
.panel-head h2{
    font-size: 11px;
    line-height: 20px;
    font-weight: normal;
}
.panel-head svg{
    width: 12px;
    height: 12px;
    stroke: #8a909c;
}
.thumb-size{
    display: flex;
    align-items: center;
    gap: 14px;
    height: 32px;
    margin: 12px 11px 0;
    padding: 0 9px 0 6px;
    border-bottom: 1px solid #dfe2e6;
}
.small{
    width: 12px;
    height: 13px;
}
input[type="range"]{
    appearance: none;
    min-width: 0;
    flex: 1;
    height: 14px;
    background: linear-gradient(#36435c,#36435c) 0 50% / 16% 1px no-repeat, linear-gradient(#cfd5dd,#cfd5dd) 0 50% / 100% 1px no-repeat;
}
input[type="range"]::-webkit-slider-thumb{
    appearance: none;
    width: 11px;
    height: 11px;
    border: 1px solid #36435c;
    border-radius: 50%;
    background-color: #f6f7f9;
}
.thumb-list{
    position: relative;
    flex: 1;
    margin-top: 10px;
    overflow: hidden;
}
.thumb{
    display: flex;
    flex-direction: column;
    align-items: center;
    height: 187px;
    padding-right: 13px;
}
.thumb:first-child{
    margin-top: -19px;
}
.card{
    padding: 10px 9px 11px;
    border-radius: 4px;
    background-color: #e1e4e9;
}
.mini{
    width: 144px;
    height: 123px;
    background-color: #fff;
    stroke: none;
}
figcaption{
    width: 21px;
    margin-top: 9px;
    border-radius: 3px;
    font-size: 11px;
    line-height: 21px;
    text-align: center;
}
.current .card,
.current figcaption{
    background-color: #dae0e8;
}
.current figcaption{
    color: #8291a8;
}
.scroll-thumb{
    position: absolute;
    top: 3%;
    right: 1px;
    width: 7px;
    height: 57%;
    border-radius: 3px;
    background-color: #dde1e4;
}
.viewer{
    flex: 1;
    overflow: hidden;
}
.page{
    width: 849px;
    margin: 0 auto 7px;
    padding: 0 8px;
    background-color: #fff;
    box-shadow: 0 0 6px 3px #d9dadd;
    font: 10px/14px "Liberation Sans", sans-serif;
    color: #4a4a55;
}
.page:first-child{
    height: 466px;
}
.page:last-child{
    height: 600px;
    padding-top: 10px;
}
table{
    border-collapse: collapse;
    table-layout: fixed;
}
.fees{
    width: 667px;
}
.c-school{ width: 79px; }
.c-name{ width: 132px; }
.c-code{ width: 143px; }
.c-date{ width: 85px; }
.c-amount{ width: 98px; }
.c-category{ width: 130px; }
td{
    height: 35px;
    padding: 0 3px;
    white-space: nowrap;
}
.fees tr:nth-child(4n+3) td{
    height: 36px;
}
.fees .tall td{
    height: 49px;
}
.fees td:nth-child(5){
    padding-right: 12px;
    text-align: right;
}
.fees td:nth-child(6){
    text-align: center;
}
.fees tr:nth-child(odd){
    background-color: #f1f1f1;
}
.fees a{
    color: #1272b8;
}
.trial{
    margin-top: 36px;
    color: #f00;
    font-size: 8px;
    line-height: 12px;
    text-align: center;
}
.criteria-head{
    display: grid;
    grid-template-columns: 428px 131px auto;
    padding-left: 3px;
    color: #a3a5b4;
    white-space: nowrap;
}
.criteria{
    display: grid;
    grid-template-columns: 188px auto;
    margin: 21px 0 36px;
    padding-left: 3px;
    line-height: 21px;
    color: #a3a5b4;
}
.accounts{
    width: 218px;
}
.accounts th{
    height: 35px;
    padding-left: 4px;
    border-top: 2px solid #a0a0a0;
    border-bottom: 1px solid #a0a0a0;
    color: #222;
    font-weight: normal;
    text-align: left;
}
.accounts td{
    height: 49px;
}
.accounts tr:nth-child(even){
    background-color: #f1f1f1;
}
.scrollbar{
    position: relative;
    width: 14px;
    border-right: 2px solid #e1e2ea;
    background-color: #e9eaef;
}
.scrollbar i{
    position: absolute;
    left: 1px;
}
.grip{
    top: 9%;
    width: 10px;
    height: 15%;
    border-radius: 5px;
    background-color: #d3d6dd;
}
.up{
    top: 10px;
    border: 4px solid transparent;
    border-top: 0;
    border-bottom: 4px solid #8a94ae;
}
.down{
    bottom: 7px;
    border: 4px solid transparent;
    border-bottom: 0;
    border-top: 4px solid #8a94ae;
}
.side-tools{
    display: flex;
    flex-direction: column;
    align-items: center;
    width: 36px;
    padding-top: 11px;
}
.handle{
    width: 18px;
    height: 5px;
    margin-bottom: 13px;
    border: 1px solid #c6c8cc;
    border-width: 1px 0;
}
.side-tools button{
    flex: none;
    height: 39px;
}
.side-tools svg{
    height: 18px;
}
.side-tools .apps{
    width: 100%;
    height: 48px;
    margin-top: auto;
    padding-top: 5px;
    border-top: 1px solid #dfe2e6;
}
.apps svg{
    stroke: #b2b4b8;
}

/* status bar */
.status-bar{
    display: flex;
    align-items: center;
    flex: none;
    height: 32px;
    border-top: 1px solid #e0e2e7;
    border-bottom: 1px solid #b9bbbd;
    background-color: #f6f7f9;
}
.status-bar button{
    width: 21px;
    height: 26px;
}
.status-bar svg{
    width: 14px;
    height: 17px;
}
.status-bar .nav{
    gap: 4px;
    width: 84px;
    margin-right: 6px;
    padding-left: 8px;
    justify-content: flex-start;
}
.status-bar input[type="text"]{
    width: 99px;
    height: 22px;
    margin: 0 8px 0 7px;
    border: 1px solid #e0e2e7;
    background-color: #fff;
    text-align: center;
}
.status-bar > .sep{
    margin: 0 5px;
}
.view-tools{
    display: flex;
    align-items: center;
    margin: 0 5px 0 auto;
}
.view-tools button:nth-child(2){
    width: 24px;
}
.view-tools .sep{
    margin: 0 9px;
}
.view-tools .far{
    margin-left: 14px;
}
.status-bar .play{
    height: 20px;
    background-color: #707c96;
}
.play svg{
    width: 12px;
    fill: #fff;
    stroke: #fff;
}
.status-bar .percent{
    width: 36px;
}
.view-tools input{
    flex: none;
    width: 126px;
    margin: 0 4px;
    background-size: 40% 1px, 100% 1px;
}

/* taskbar */
.taskbar{
    display: flex;
    align-items: center;
    flex: none;
    height: 39px;
    background: linear-gradient(90deg,#20363e 25%,#1e3040 60%,#1a2542);
    color: #fff;
    font-size: 11px;
}
.start{
    width: 40px;
    height: 100%;
}
.taskbar .start svg{
    height: 18px;
    stroke: none;
}
.search{
    display: flex;
    align-items: center;
    gap: 9px;
    width: 312px;
    height: 100%;
    padding-left: 11px;
    background-color: #f1f1f1;
}
.search input{
    font-size: 14px;
}
.search input::placeholder{
    color: #2f3239;
}
.apps-row{
    display: flex;
    height: 100%;
}
.apps-row button{
    width: 45px;
    height: 100%;
}
.apps-row svg{
    width: 24px;
    height: 28px;
    stroke: none;
}
.apps-row .running{
    background-color: #4c5c65;
}
.tray{
    display: flex;
    align-items: center;
    gap: 6px;
    margin-left: auto;
    padding-right: 20px;
}
.tray svg{
    height: 18px;
    stroke: #fff;
}
.tray .weather{
    gap: 8px;
    margin-right: 8px;
    font-size: 12px;
}
.tray .weather svg{
    width: 19px;
    height: 22px;
    stroke: none;
}
.lang{
    width: 22px;
    text-align: center;
    font-size: 10px;
}
.clock{
    display: flex;
    flex-direction: column;
    align-items: center;
    width: 72px;
    line-height: 19px;
}
.tray .note{
    stroke: none;
}
```
